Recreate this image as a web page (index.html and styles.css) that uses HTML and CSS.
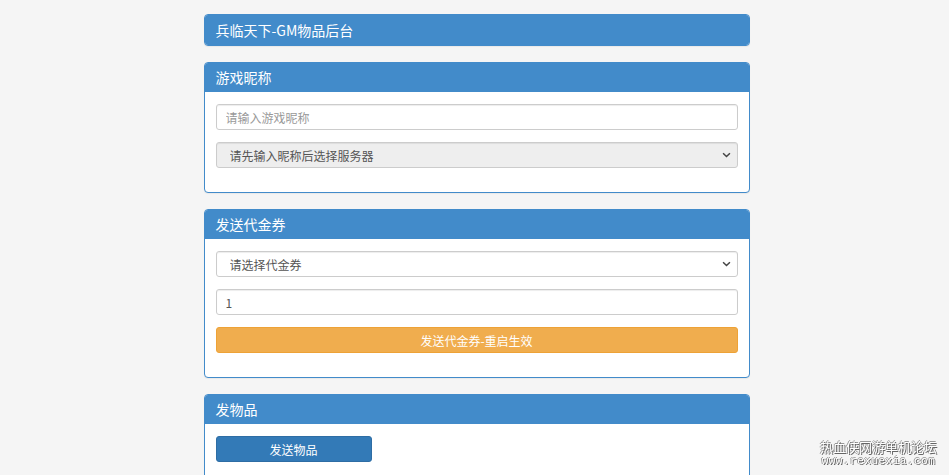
FILE: index.html
```html
<!DOCTYPE html>
<html lang="zh-CN">
<head>
<meta charset="utf-8">
<title>兵临天下-GM物品后台</title>
<link rel="stylesheet" href="styles.css">
</head>
<body>
<div class="container">
  <div class="panel">
    <div class="panel-heading title">兵临天下-GM物品后台</div>
  </div>

  <div class="panel">
    <div class="panel-heading">游戏昵称</div>
    <div class="panel-body">
      <input class="form-control" type="text" placeholder="请输入游戏昵称">
      <select class="form-control" disabled>
        <option>请先输入昵称后选择服务器</option>
      </select>
    </div>
  </div>

  <div class="panel">
    <div class="panel-heading">发送代金券</div>
    <div class="panel-body">
      <select class="form-control">
        <option>请选择代金券</option>
      </select>
      <input class="form-control" type="text" value="1">
      <button class="btn btn-warning" type="button">发送代金券-重启生效</button>
    </div>
  </div>

  <div class="panel">
    <div class="panel-heading">发物品</div>
    <div class="panel-body">
      <button class="btn btn-primary" type="button">发送物品</button>
    </div>
  </div>
</div>

<div class="watermark">
  <div class="wm-cn">热血侠网游单机论坛</div>
  <div class="wm-url">www.rexuexia.com</div>
</div>
</body>
</html>
```

FILE: styles.css
```css
* {
  box-sizing: border-box;
}

html, body {
  margin: 0;
  padding: 0;
  background: #f5f5f5;
  height: 100%;
  overflow: hidden;
}

body {
  font-family: "Microsoft YaHei", "Noto Sans CJK SC", "Liberation Sans", sans-serif;
  font-size: 12px;
  color: #555;
}

.container {
  width: 546px;
  margin: 0 auto;
  padding-top: 14px;
  display: flex;
  flex-direction: column;
  gap: 16px;
  position: relative;
  left: 2px;
}

.panel {
  background: #fff;
  border: 1px solid #428bca;
  border-radius: 4px;
  box-shadow: 0 1px 1px rgba(0, 0, 0, 0.05);
  overflow: hidden;
}

.panel-heading {
  background: #428bca;
  color: #fff;
  font-size: 14px;
  line-height: 20px;
  height: 29px;
  padding: 4px 11px 5px;
}

.panel-heading.title {
  height: 30px;
  padding-top: 5px;
}

.panel-body {
  padding: 12px 11px 24px;
  display: flex;
  flex-direction: column;
  gap: 12px;
}

.form-control {
  display: block;
  width: 100%;
  height: 26px;
  padding: 0 9px;
  font: inherit;
  font-size: 12px;
  color: #555;
  background: #fff;
  border: 1px solid #ccc;
  border-radius: 3px;
  box-shadow: inset 0 1px 1px rgba(0, 0, 0, 0.075);
  outline: none;
}

.form-control::placeholder {
  color: #999;
}

select.form-control {
  appearance: none;
  -webkit-appearance: none;
  padding-left: 13px;
  background-image: url("data:image/svg+xml;utf8,<svg xmlns='http://www.w3.org/2000/svg' width='10' height='7' viewBox='0 0 10 7'><path d='M1 1.5 L5 5.2 L9 1.5' fill='none' stroke='%23444' stroke-width='1.8'/></svg>");
  background-repeat: no-repeat;
  background-position: right 6px center;
  background-size: 9px 6px;
}

select.form-control:disabled {
  background-color: #eee;
  color: #555;
  opacity: 1;
}

.btn {
  display: block;
  height: 26px;
  border: 1px solid transparent;
  border-radius: 3px;
  font: inherit;
  font-size: 12px;
  color: #fff;
  padding: 0;
  cursor: pointer;
}

.btn-warning {
  width: 100%;
  background: #f0ad4e;
  border-color: #eea236;
}

.btn-primary {
  width: 156px;
  background: #337ab7;
  border-color: #2e6da4;
}

.watermark {
  position: fixed;
  right: 12px;
  bottom: 8px;
  text-align: center;
  color: #fff;
  text-shadow: 1px 1px 0 #666, -1px 0 0 #999, 0 -1px 0 #999;
  line-height: 1;
}

.wm-cn {
  font-size: 13px;
  margin-bottom: 3px;
}

.wm-url {
  font-family: "Liberation Mono", "DejaVu Sans Mono", monospace;
  font-size: 11px;
  letter-spacing: 0.5px;
}
```
